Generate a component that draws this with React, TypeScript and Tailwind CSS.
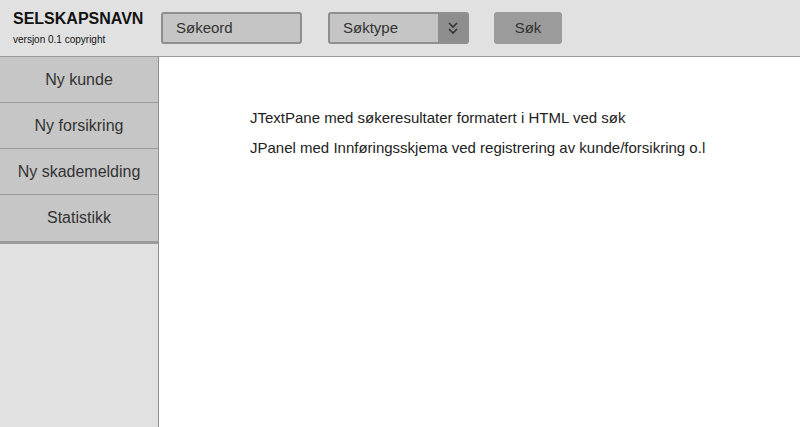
const menu = ["Ny kunde", "Ny forsikring", "Ny skademelding", "Statistikk"];

export default function App() {
  return (
    <div
      className="flex h-[427px] w-[800px] flex-col overflow-hidden bg-white text-[#222]"
      style={{ fontFamily: '"Liberation Sans", Arial, sans-serif' }}
    >
      <header className="flex h-[57px] shrink-0 items-start border-b border-[#9a9a9a] bg-[#e1e1e1]">
        <div className="w-[161px] pl-[13px] pt-[9px]">
          <div className="text-[16px] font-bold leading-[20px] text-[#111]">SELSKAPSNAVN</div>
          <div className="mt-[5px] text-[10px] leading-[12px] text-[#111]">versjon 0.1 copyright</div>
        </div>
        <div className="mt-[12px] flex h-[32px] w-[141px] items-center rounded-[3px] border-2 border-[#8e8e8e] bg-[#c5c5c5] pl-[13px] text-[15px] text-[#333]">
          Søkeord
        </div>
        <div className="ml-[26px] mt-[12px] flex h-[32px] w-[141px] overflow-hidden rounded-[3px] border-2 border-[#8e8e8e] bg-[#c5c5c5]">
          <div className="flex flex-1 items-center pl-[13px] text-[15px] text-[#333]">Søktype</div>
          <div className="flex w-[29px] items-center justify-center bg-[#8e8e8e]">
            <svg width="10" height="14" viewBox="0 0 10 14" fill="none" stroke="#333" strokeWidth="1.6">
              <path d="M1 2l4 4 4-4" />
              <path d="M1 8l4 4 4-4" />
            </svg>
          </div>
        </div>
        <div className="ml-[25px] mt-[12px] flex h-[32px] w-[68px] items-center justify-center rounded-[3px] bg-[#9b9b9b] text-[15px] text-[#333]">
          Søk
        </div>
      </header>
      <div className="flex flex-1">
        <aside className="w-[159px] shrink-0 border-r border-[#8e8e8e] bg-[#e1e1e1]">
          <div className="border-b-[3px] border-[#9a9a9a]">
            {menu.map((m, i) => (
              <div
                key={m}
                className={`flex h-[46px] items-center justify-center bg-[#c6c6c6] text-[16px] text-[#333] ${
                  i < menu.length - 1 ? "border-b border-[#9a9a9a]" : ""
                }`}
              >
                {m}
              </div>
            ))}
          </div>
        </aside>
        <main className="flex-1 pl-[91px] pt-[46px] text-[15px] leading-[30px] text-[#222]">
          <p>JTextPane med søkeresultater formatert i HTML ved søk</p>
          <p>JPanel med Innføringsskjema ved registrering av kunde/forsikring o.l</p>
        </main>
      </div>
    </div>
  );
}
